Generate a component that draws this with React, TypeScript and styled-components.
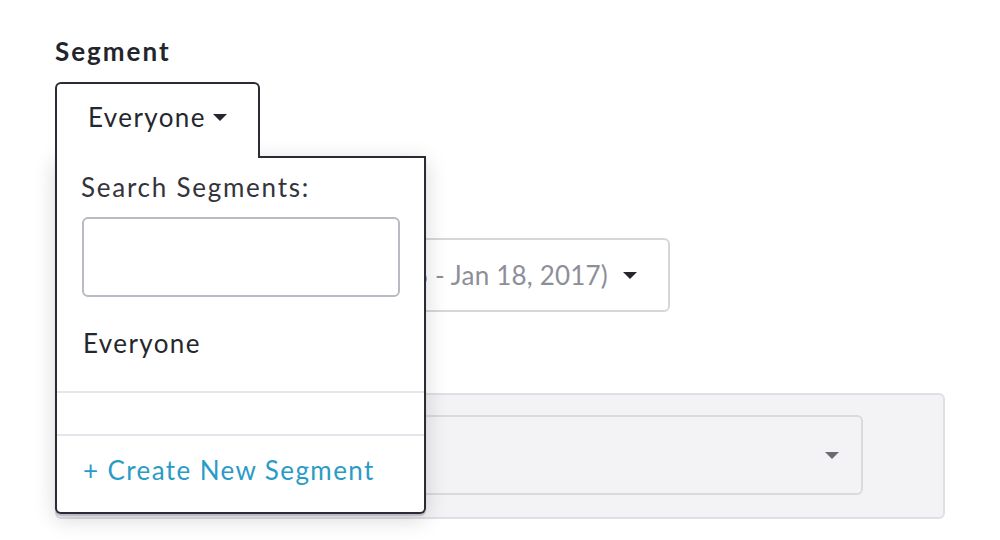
import styled, { createGlobalStyle } from 'styled-components';

const GlobalStyle = createGlobalStyle`
  html, body {
    margin: 0;
    background: #ffffff;
  }
  body {
    font-family: Lato, "Open Sans", sans-serif;
    letter-spacing: 1.4px;
    color: #26272e;
  }
  button, input {
    font-family: inherit;
    letter-spacing: inherit;
  }
  * {
    box-sizing: border-box;
  }
`;

const Page = styled.div`
  padding: 36px 55px 0;
  width: 1000px;
  height: 540px;
  overflow: hidden;
`;

const FieldLabel = styled.h2`
  margin: 0 0 16px;
  font-size: 26px;
  line-height: 30px;
  font-weight: 700;
  letter-spacing: 2px;
  color: #24252c;
`;

const SegmentField = styled.div`
  position: relative;
  display: inline-block;
  z-index: 5;
`;

const Caret = styled.span<{ $color?: string }>`
  display: inline-block;
  flex-shrink: 0;
  width: 0;
  height: 0;
  border-left: 7px solid transparent;
  border-right: 7px solid transparent;
  border-top: 7px solid ${(p) => p.$color || '#26272e'};
`;

const Trigger = styled.button`
  position: relative;
  z-index: 2;
  display: flex;
  align-items: center;
  gap: 7px;
  width: 205px;
  height: 74px;
  padding: 0 0 6px 31px;
  background: #ffffff;
  border: 2px solid #2b2c33;
  border-bottom: 0;
  border-radius: 6px 6px 0 0;
  font-size: 26px;
  color: #26272e;
  cursor: pointer;
`;

const Menu = styled.div`
  position: absolute;
  top: 100%;
  left: 0;
  z-index: 1;
  width: 371px;
  height: 358px;
  padding-top: 16px;
  background: #ffffff;
  border: 2px solid #2b2c33;
  border-top: 0;
  border-radius: 0 0 6px 6px;
  box-shadow: 0 2px 1px rgba(160, 162, 178, 0.6), 0 5px 22px rgba(0, 0, 0, 0.16);

  &::before {
    content: '';
    position: absolute;
    top: 0;
    left: 201px;
    right: 0;
    height: 2px;
    background: #2b2c33;
  }
`;

const MenuSection = styled.div`
  padding: 0 24px;
`;

const SearchLabel = styled.label`
  display: block;
  font-size: 26px;
  line-height: 30px;
  letter-spacing: 1.75px;
  color: #33343b;
`;

const SearchInput = styled.input`
  display: block;
  width: 318px;
  height: 80px;
  margin: 15px 0 0 1px;
  border: 2px solid #b9bac2;
  border-radius: 6px;
  outline: none;
  font-size: 24px;
  padding: 0 16px;
`;

const Option = styled.div`
  padding: 31px 26px 33px;
  font-size: 26px;
  line-height: 30px;
  color: #26272e;
`;

const Divider = styled.div`
  height: 2px;
  background: #e5e6eb;
`;

const Spacer = styled.div`
  height: 41px;
`;

const CreateLink = styled.a`
  display: block;
  padding: 19px 26px 21px;
  font-size: 26px;
  line-height: 30px;
  color: #2a9bc6;
  text-decoration: none;
  cursor: pointer;
`;

const DateButton = styled.button`
  display: flex;
  align-items: center;
  justify-content: flex-end;
  gap: 15px;
  width: 615px;
  height: 74px;
  margin-top: 82px;
  padding: 0 31px 0 24px;
  overflow: hidden;
  background: #ffffff;
  border: 2px solid #d6d7db;
  border-radius: 6px;
  font-size: 26px;
  color: #8d8f98;
  cursor: pointer;
`;

const DateText = styled.span`
  flex-shrink: 0;
  white-space: nowrap;
  letter-spacing: 0.2px;
`;

const MetricPanel = styled.div`
  width: 890px;
  height: 126px;
  margin-top: 81px;
  padding: 20px;
  background: #f3f3f6;
  border: 2px solid #dfe0e6;
  border-radius: 6px;
`;

const MetricSelect = styled.div`
  display: flex;
  align-items: center;
  justify-content: flex-end;
  width: 786px;
  height: 80px;
  padding-right: 22px;
  border: 2px solid #dadadd;
  border-radius: 6px;
  background: #f3f3f6;
`;

export default function App() {
  return (
    <>
      <GlobalStyle />
      <Page>
        <FieldLabel>Segment</FieldLabel>
        <SegmentField>
          <Trigger>
            Everyone <Caret />
          </Trigger>
          <Menu>
            <MenuSection>
              <SearchLabel htmlFor="segment-search">Search Segments:</SearchLabel>
              <SearchInput id="segment-search" type="text" />
            </MenuSection>
            <Option>Everyone</Option>
            <Divider />
            <Spacer />
            <Divider />
            <CreateLink>+ Create New Segment</CreateLink>
          </Menu>
        </SegmentField>
        <DateButton>
          <DateText>Last 30 Days (Dec 20, 2016 - Jan 18, 2017)</DateText>
          <Caret />
        </DateButton>
        <MetricPanel>
          <MetricSelect>
            <Caret $color="#6b6c74" />
          </MetricSelect>
        </MetricPanel>
      </Page>
    </>
  );
}
